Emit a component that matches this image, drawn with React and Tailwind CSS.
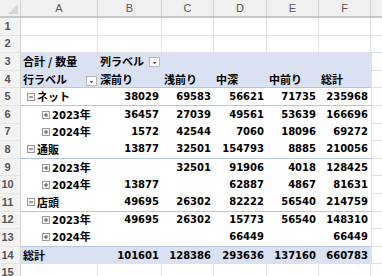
import React from 'react';

const colW = ['w-[77px]', 'w-[64px]', 'w-[52px]', 'w-[53px]', 'w-[52px]', 'w-[52px]'];
const letters = ['A', 'B', 'C', 'D', 'E', 'F'];

const rows = [
  { n: 5, kind: 'cat', label: 'ネット', vals: [38029, 69583, 56621, 71735, 235968], line: true },
  { n: 6, kind: 'year', label: '2023', vals: [36457, 27039, 49561, 53639, 166696] },
  { n: 7, kind: 'year', label: '2024', vals: [1572, 42544, 7060, 18096, 69272] },
  { n: 8, kind: 'cat', label: '通販', vals: [13877, 32501, 154793, 8885, 210056], line: true },
  { n: 9, kind: 'year', label: '2023', vals: ['', 32501, 91906, 4018, 128425] },
  { n: 10, kind: 'year', label: '2024', vals: [13877, '', 62887, 4867, 81631] },
  { n: 11, kind: 'cat', label: '店頭', vals: [49695, 26302, 82222, 56540, 214759], line: true },
  { n: 12, kind: 'year', label: '2023', vals: [49695, 26302, 15773, 56540, 148310] },
  { n: 13, kind: 'year', label: '2024', vals: ['', '', 66449, '', 66449], line: true },
];

function Toggle({ open }) {
  return (
    <svg width="8" height="8" viewBox="0 0 8 8" className="shrink-0">
      <rect x="0.5" y="0.5" width="7" height="7" fill="#f4f4f4" stroke="#9a9a9a" />
      <path d="M2 4h4" stroke="#505050" />
      {!open && <path d="M4 2v4" stroke="#505050" />}
    </svg>
  );
}

function FilterBtn() {
  return (
    <svg width="11" height="10" viewBox="0 0 11 10" className="shrink-0">
      <rect x="0.5" y="0.5" width="10" height="9" fill="#fbfbfb" stroke="#b8b8b8" />
      <path d="M3.5 5h4l-2 2.2z" fill="#555" />
    </svg>
  );
}

function RowNum({ n }) {
  return (
    <div className="w-[21px] h-full shrink-0 flex items-center justify-center pr-[5px] bg-[#f3f3f3] border-r border-b border-r-[#d4d4d4] border-b-[#e4e4e4] text-[11px] text-[#555] font-['Liberation_Sans',sans-serif]">
      {n}
    </div>
  );
}

function Tail() {
  return <div className="flex-1 h-full border-l border-b border-[#e1e1e1]" />;
}

function EmptyRow({ n }) {
  return (
    <div className="flex h-[17.6px]">
      <RowNum n={n} />
      {colW.map((w, i) => (
        <div key={i} className={`${w} h-full shrink-0 border-r border-b border-[#e1e1e1]`} />
      ))}
      <div className="flex-1 h-full border-b border-[#e1e1e1]" />
    </div>
  );
}

function Jp({ children }) {
  return <span className="text-[11px] font-['Noto_Sans_CJK_JP',sans-serif]">{children}</span>;
}

function PivotRow({ n, blue, line, children }) {
  return (
    <div className="flex h-[17.6px]">
      <RowNum n={n} />
      <div
        className={`flex w-[350px] h-full shrink-0 ${blue ? 'bg-[#d9e1f2]' : 'bg-white'} ${line ? 'border-b border-[#b4c6e7]' : ''}`}
      >
        {children}
      </div>
      <Tail />
    </div>
  );
}

function Num({ w, v }) {
  return <div className={`${w} h-full shrink-0 flex items-center justify-end pr-[3px]`}>{v}</div>;
}

export default function App() {
  return (
    <div className="w-[382px] h-[276px] overflow-hidden bg-white font-['DejaVu_Sans','Noto_Sans_CJK_JP',sans-serif] text-[10px] font-bold text-black leading-none">
      <div className="flex h-[18px] bg-[#f0f0f0] border-b-2 border-[#c8c8c8]">
        <div className="relative w-[21px] h-full shrink-0 border-r border-[#d4d4d4]">
          <svg width="10" height="10" viewBox="0 0 10 10" className="absolute right-[2px] bottom-[2px]">
            <path d="M10 0v10H0z" fill="#d6d6d6" />
          </svg>
        </div>
        {colW.map((w, i) => (
          <div
            key={i}
            className={`${w} h-full shrink-0 flex items-center justify-center border-r border-[#d4d4d4] text-[11px] font-normal text-[#555] font-['Liberation_Sans',sans-serif]`}
          >
            {letters[i]}
          </div>
        ))}
        <div className="flex-1 h-full" />
      </div>

      <EmptyRow n={1} />
      <EmptyRow n={2} />

      <PivotRow n={3} blue>
        <div className={`${colW[0]} h-full shrink-0 flex items-center pl-[2px]`}>
          <Jp>
            合計<span className="mx-[3px]">/</span>数量
          </Jp>
        </div>
        <div className={`${colW[1]} h-full shrink-0 flex items-center justify-between pl-[2px] pr-[2px]`}>
          <Jp>列ラベル</Jp>
          <FilterBtn />
        </div>
      </PivotRow>

      <PivotRow n={4} blue line>
        <div className={`${colW[0]} h-full shrink-0 flex items-center justify-between pl-[2px] pr-[1px]`}>
          <Jp>行ラベル</Jp>
          <div className="self-end mb-[1px]">
            <FilterBtn />
          </div>
        </div>
        {['深前り', '浅前り', '中深', '中前り', '総計'].map((t, i) => (
          <div key={t} className={`${colW[i + 1]} h-full shrink-0 flex items-center pl-[2px]`}>
            <Jp>{t}</Jp>
          </div>
        ))}
      </PivotRow>

      {rows.map((r) => (
        <PivotRow key={r.n} n={r.n} line={r.line}>
          <div
            className={`${colW[0]} h-full shrink-0 flex items-center gap-[2px] ${r.kind === 'cat' ? 'pl-[6px]' : 'pl-[21px]'}`}
          >
            <Toggle open={r.kind === 'cat'} />
            {r.kind === 'cat' ? (
              <Jp>{r.label}</Jp>
            ) : (
              <span>
                {r.label}
                <Jp>年</Jp>
              </span>
            )}
          </div>
          {r.vals.map((v, i) => (
            <Num key={i} w={colW[i + 1]} v={v} />
          ))}
        </PivotRow>
      ))}

      <PivotRow n={14} blue>
        <div className={`${colW[0]} h-full shrink-0 flex items-center pl-[2px]`}>
          <Jp>総計</Jp>
        </div>
        {[101601, 128386, 293636, 137160, 660783].map((v, i) => (
          <Num key={i} w={colW[i + 1]} v={v} />
        ))}
      </PivotRow>

      <EmptyRow n={15} />
    </div>
  );
}
